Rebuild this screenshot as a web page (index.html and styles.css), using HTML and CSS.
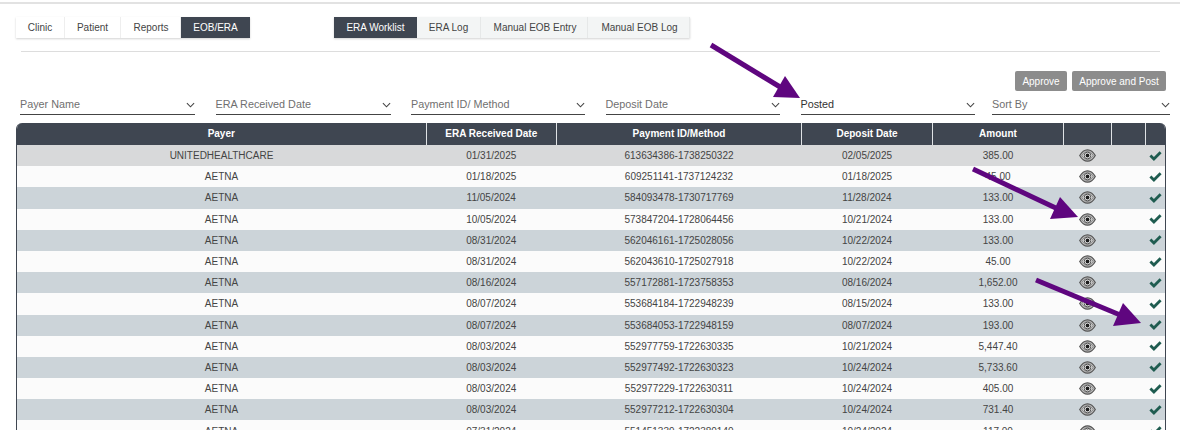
FILE: index.html
```html
<!DOCTYPE html>
<html lang="en">
<head>
<meta charset="utf-8">
<title>ERA Worklist</title>
<link rel="stylesheet" href="styles.css">
</head>
<body>
<svg width="0" height="0" class="defs">
  <symbol id="eye" viewBox="0 0 17 13">
    <path d="M.7 6.500C3 2.400 5.500.8 8.500.8s5.500 1.600 7.800 5.700C14 10.600 11.500 12.200 8.500 12.200S3 10.600.7 6.500z" fill="#bdbdbd" stroke="#555" stroke-width="1.200"/>
    <path d="M3 6.500C4.500 4 6.500 2.700 8.500 2.700s4 1.300 5.500 3.800C12.500 9 10.500 10.300 8.500 10.300S4.500 9 3 6.500z" fill="#e8e8e8" stroke="#777" stroke-width=".9"/>
    <circle cx="8.500" cy="6.500" r="3.300" fill="#f4f4f4" stroke="#555" stroke-width="1"/>
    <circle cx="8.500" cy="6.500" r="1.900" fill="#1c1c1c"/>
  </symbol>
  <symbol id="check" viewBox="0 0 13 10">
    <path d="M.4 5.500 2.400 3.500 4.900 6 10.600.3 12.600 2.300 4.900 10z" fill="#1f5c50"/>
  </symbol>
</svg>
<main class="page">
  <div class="tabs-row">
    <nav class="tabs">
      <a class="tab tab-clinic">Clinic</a>
      <a class="tab tab-patient">Patient</a>
      <a class="tab tab-reports">Reports</a>
      <a class="tab active tab-eob">EOB/ERA</a>
    </nav>
    <nav class="tabs subtabs">
      <a class="tab active tab-work">ERA Worklist</a>
      <a class="tab tab-log">ERA Log</a>
      <a class="tab tab-entry">Manual EOB Entry</a>
      <a class="tab tab-mlog">Manual EOB Log</a>
    </nav>
  </div>
  <hr class="rule">
  <div class="actions">
    <button class="btn btn-approve">Approve</button>
    <button class="btn btn-post">Approve and Post</button>
  </div>
  <div class="filters">
    <div class="filter"><span>Payer Name</span><svg class="chev" viewBox="0 0 10 6"><path d="M1 1l4 4 4-4"/></svg></div>
    <div class="filter"><span>ERA Received Date</span><svg class="chev" viewBox="0 0 10 6"><path d="M1 1l4 4 4-4"/></svg></div>
    <div class="filter"><span>Payment ID/ Method</span><svg class="chev" viewBox="0 0 10 6"><path d="M1 1l4 4 4-4"/></svg></div>
    <div class="filter"><span>Deposit Date</span><svg class="chev" viewBox="0 0 10 6"><path d="M1 1l4 4 4-4"/></svg></div>
    <div class="filter selected"><span>Posted</span><svg class="chev" viewBox="0 0 10 6"><path d="M1 1l4 4 4-4"/></svg></div>
    <div class="filter sort"><span>Sort By</span><svg class="chev" viewBox="0 0 10 6"><path d="M1 1l4 4 4-4"/></svg></div>
  </div>
  <div class="table-wrap">
    <table class="grid">
      <colgroup>
        <col class="c1"><col class="c2"><col class="c3"><col class="c4"><col class="c5"><col class="c6"><col class="c7"><col class="c8">
      </colgroup>
      <thead>
        <tr><th>Payer</th><th>ERA Received Date</th><th>Payment ID/Method</th><th>Deposit Date</th><th>Amount</th><th></th><th></th><th></th></tr>
      </thead>
      <tbody id="rows"></tbody>
    </table>
  </div>
</main>
<svg class="arrows" viewBox="0 0 1180 430" width="1180" height="430">
  <g stroke="#5f067f" stroke-width="5" fill="#5f067f">
    <path d="M711 45 785 90"/>
    <path stroke="none" d="M785 76 800 98 773 97z"/>
    <path d="M973 169 1060 210"/>
    <path stroke="none" d="M1060 197 1078 217 1050 219z"/>
    <path d="M1036 280 1125 317"/>
    <path stroke="none" d="M1123 303 1141 323 1113 326z"/>
  </g>
</svg>
<script src="rows.js"></script>
</body>
</html>
```
FILE: rows.js
```js
var data = [
  ["UNITEDHEALTHCARE","01/31/2025","613634386-1738250322","02/05/2025","385.00"],
  ["AETNA","01/18/2025","609251141-1737124232","01/18/2025","45.00"],
  ["AETNA","11/05/2024","584093478-1730717769","11/28/2024","133.00"],
  ["AETNA","10/05/2024","573847204-1728064456","10/21/2024","133.00"],
  ["AETNA","08/31/2024","562046161-1725028056","10/22/2024","133.00"],
  ["AETNA","08/31/2024","562043610-1725027918","10/22/2024","45.00"],
  ["AETNA","08/16/2024","557172881-1723758353","08/16/2024","1,652.00"],
  ["AETNA","08/07/2024","553684184-1722948239","08/15/2024","133.00"],
  ["AETNA","08/07/2024","553684053-1722948159","08/07/2024","193.00"],
  ["AETNA","08/03/2024","552977759-1722630335","10/21/2024","5,447.40"],
  ["AETNA","08/03/2024","552977492-1722630323","10/24/2024","5,733.60"],
  ["AETNA","08/03/2024","552977229-1722630311","10/24/2024","405.00"],
  ["AETNA","08/03/2024","552977212-1722630304","10/24/2024","731.40"],
  ["AETNA","07/31/2024","551451339-1722380140","10/24/2024","117.00"]
];
var body = document.getElementById("rows");
data.forEach(function (r, i) {
  var tr = document.createElement("tr");
  if (i === 0) tr.className = "first";
  r.forEach(function (v) {
    var td = document.createElement("td");
    td.textContent = v;
    tr.appendChild(td);
  });
  var eye = document.createElement("td");
  eye.innerHTML = '<svg class="eye"><use href="#eye"/></svg>';
  tr.appendChild(eye);
  tr.appendChild(document.createElement("td"));
  var chk = document.createElement("td");
  chk.className = "chk";
  chk.innerHTML = '<svg class="check"><use href="#check"/></svg>';
  tr.appendChild(chk);
  body.appendChild(tr);
});
```
FILE: styles.css
```css
* { box-sizing: border-box; }
html, body { height: 430px; overflow: hidden; }
body {
  margin: 0;
  background: #fff;
  font-family: "Liberation Sans", Arial, sans-serif;
  color: #444;
}
.defs { position: absolute; }
.page {
  border-top: 2px solid #e2e2e2;
  margin-top: 2px;
  padding: 13px 14px 0 16px;
}
.tabs-row { display: flex; height: 21px; }
.tabs { display: flex; box-shadow: 0 1px 2px rgba(0,0,0,.18); background: #fff; }
.subtabs { margin-left: 84px; background: #f3f5f5; }
.tab {
  display: flex;
  align-items: center;
  justify-content: center;
  font-size: 10px;
  color: #444;
  border-right: 1px solid #eee;
}
.tab.active { background: #3f4651; color: #fff; border-right: 0; }
.tab-clinic { width: 49px; }
.tab-patient { width: 56px; }
.tab-reports { width: 60px; padding-left: 1px; }
.tab-eob { width: 69px; }
.tab-work { width: 83px; }
.tab-log { width: 64px; }
.tab-entry { width: 107px; padding-left: 2px; }
.tab-mlog { width: 102px; padding-left: 2px; }
.subtabs .tab { border-right-color: #e6e8e8; }
.rule {
  margin: 13px 6px 0 5px;
  border: 0;
  border-top: 1px solid #ddd;
}
.actions {
  display: flex;
  justify-content: flex-end;
  gap: 5px;
  margin-top: 19px;
  height: 20px;
}
.btn {
  border: 0;
  border-radius: 2px;
  background: #8c8c8c;
  color: #fff;
  font: 10px "Liberation Sans", Arial, sans-serif;
  padding: 0;
}
.btn-approve { width: 52px; }
.btn-post { width: 94px; }
.filters {
  display: grid;
  grid-template-columns: 175px 175px 174px 174.500px 174.500px 174px;
  column-gap: 20.500px;
  margin: 2px 0 0 4px;
  width: 1147px;
}
.filter {
  display: flex;
  align-items: center;
  justify-content: space-between;
  height: 22px;
  border-bottom: 1px solid #444;
  font-size: 10.800px;
  color: #6f6f6f;
}
.filter.selected { color: #333; }
.filter.sort { margin-left: -3.500px; }
.chev { width: 9px; height: 6px; margin-top: 2px; fill: none; stroke: #444; stroke-width: 1.200; }
.table-wrap {
  margin-top: 8px;
  width: 1150px;
  border: solid #3f4651;
  border-width: 0 1.500px 0 1.500px;
  border-radius: 6px 6px 0 0;
  overflow: hidden;
}
.grid {
  width: 100%;
  table-layout: fixed;
  border-collapse: collapse;
  font-size: 10px;
}
.c1 { width: 409px; }
.c2 { width: 130.500px; }
.c3 { width: 245px; }
.c4 { width: 131px; }
.c5 { width: 131px; }
.c6 { width: 48px; }
.c7 { width: 33.500px; }
.grid th {
  height: 22px;
  padding: 0 0 2px;
  background: #3f4651;
  color: #fff;
  font-weight: bold;
  border-left: 1px solid #dfe2e5;
}
.grid th:first-child { border-left: 0; }
.grid td {
  height: 21.200px;
  padding: 0;
  text-align: center;
  color: #444;
  vertical-align: middle;
}
.grid tbody tr:nth-child(odd) td { background: #ccd4d9; }
.grid tbody tr:nth-child(even) td { background: #fbfbfb; }
.grid tbody tr.first td { background: #d8d9da; }
.eye { display: block; width: 17px; height: 13px; margin: 0 auto; }
.check { display: block; width: 13px; height: 10px; margin: 0 auto; }
.arrows { position: absolute; left: 0; top: 0; pointer-events: none; }
```
